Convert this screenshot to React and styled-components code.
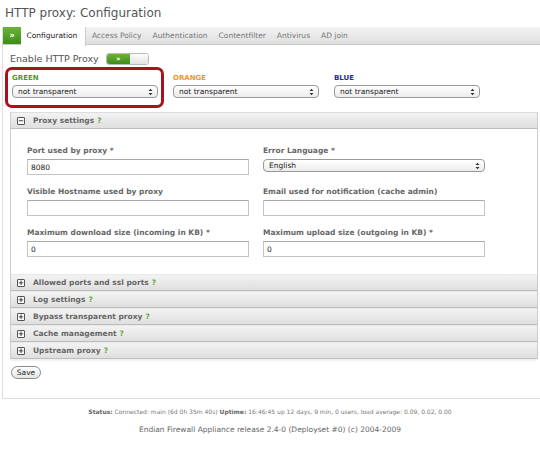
import React from 'react';
import styled, { createGlobalStyle } from 'styled-components';

const GlobalStyle = createGlobalStyle`
    body {
        margin: 0;
        background: #fff;
        font-family: "DejaVu Sans", "Liberation Sans", sans-serif;
        color: #555;
    }
`

const zones = [
    { name: 'GREEN', color: '#4c9a1e' },
    { name: 'ORANGE', color: '#f0962a' },
    { name: 'BLUE', color: '#2a2e8c' },
]

const tabs = ['Access Policy', 'Authentication', 'Contentfilter', 'Antivirus', 'AD join']

const collapsed = [
    'Allowed ports and ssl ports',
    'Log settings',
    'Bypass transparent proxy',
    'Cache management',
    'Upstream proxy',
]

function Select({ value, width }) {
    return (
        <SelectBox width={width}>
            <span>{value}</span>
            <Arrows>
                <svg width="5" height="8" viewBox="0 0 5 8">
                    <path d="M0.5 3 L2.5 0.8 L4.5 3 Z M0.5 5 L2.5 7.2 L4.5 5 Z" fill="#333" />
                </svg>
            </Arrows>
        </SelectBox>
    )
}

function Toggle() {
    return (
        <Switch>
            <SwitchOn>»</SwitchOn>
            <SwitchOff />
        </Switch>
    )
}

function App() {
    return (
        <>
            <GlobalStyle />
            <Title>HTTP proxy: Configuration</Title>
            <Frame>
                <TabBar>
                    <GreenTab>»</GreenTab>
                    <Tab active>Configuration</Tab>
                    {tabs.map(t => <Tab key={t}>{t}</Tab>)}
                </TabBar>
                <Content>
                    <EnableRow>
                        Enable HTTP Proxy
                        <Toggle />
                    </EnableRow>
                    <ZoneRow>
                        <Highlight />
                        {zones.map(z => (
                            <Zone key={z.name}>
                                <ZoneLabel color={z.color}>{z.name}</ZoneLabel>
                                <Select value="not transparent" width={146} />
                            </Zone>
                        ))}
                    </ZoneRow>
                    <Panels>
                        <PanelHeader>
                            <ToggleIcon>−</ToggleIcon>
                            Proxy settings <Help>?</Help>
                        </PanelHeader>
                        <PanelBody>
                            <Field>
                                <Label>Port used by proxy *</Label>
                                <Input defaultValue="8080" />
                            </Field>
                            <Field>
                                <Label>Error Language *</Label>
                                <Select value="English" width={222} />
                            </Field>
                            <Field>
                                <Label>Visible Hostname used by proxy</Label>
                                <Input />
                            </Field>
                            <Field>
                                <Label>Email used for notification (cache admin)</Label>
                                <Input />
                            </Field>
                            <Field>
                                <Label>Maximum download size (incoming in KB) *</Label>
                                <Input defaultValue="0" />
                            </Field>
                            <Field>
                                <Label>Maximum upload size (outgoing in KB) *</Label>
                                <Input defaultValue="0" />
                            </Field>
                        </PanelBody>
                        {collapsed.map(c => (
                            <PanelHeader key={c} closed>
                                <ToggleIcon>+</ToggleIcon>
                                {c} <Help>?</Help>
                            </PanelHeader>
                        ))}
                    </Panels>
                    <SaveButton>Save</SaveButton>
                </Content>
            </Frame>
            <Footer>
                <Status>
                    <b>Status:</b> Connected: main (6d 0h 35m 40s) <b>Uptime:</b> 16:46:45 up 12 days, 9 min, 0 users, load average: 0.09, 0.02, 0.00
                </Status>
                <Release>Endian Firewall Appliance release 2.4-0 (Deployset #0) (c) 2004-2009</Release>
            </Footer>
        </>
    )
}

export default App

const Title = styled.h1`
    margin: 0;
    height: 27px;
    padding-left: 5px;
    font-size: 12px;
    font-weight: normal;
    line-height: 27px;
    color: #555;
`

const Frame = styled.div`
    margin-left: 2px;
    border-left: 1px solid #ddd;
    border-bottom: 1px solid #ddd;
    height: 372px;
    box-sizing: border-box;
`

const TabBar = styled.div`
    display: flex;
    align-items: stretch;
    height: 18px;
    background: linear-gradient(#f4f4f4, #dedede);
    border-bottom: 1px solid #c8c8c8;
    box-sizing: border-box;
`

const GreenTab = styled.div`
    width: 18px;
    background: linear-gradient(#6bb43a, #3f8c1a);
    color: #fff;
    font-size: 8px;
    font-weight: bold;
    display: flex;
    align-items: center;
    justify-content: center;
`

const Tab = styled.div`
    padding: ${p => p.active ? '0 8px 0 5.5px' : '0 5.5px'};
    font-size: 7.5px;
    line-height: 18px;
    color: ${p => p.active ? '#222' : '#777'};
    background: ${p => p.active ? '#fff' : 'transparent'};
    border-right: ${p => p.active ? '1px solid #ccc' : 'none'};
    height: ${p => p.active ? '19px' : '18px'};
    white-space: nowrap;
`

const Content = styled.div`
    padding: 7px 0 0 7px;
`

const EnableRow = styled.div`
    display: flex;
    align-items: center;
    gap: 7px;
    height: 13px;
    font-size: 9.5px;
    color: #555;
`

const Switch = styled.div`
    display: flex;
    width: 43px;
    height: 12px;
    border: 1px solid #bbb;
    border-radius: 3px;
    overflow: hidden;
    box-sizing: border-box;
`

const SwitchOn = styled.div`
    width: 23px;
    background: linear-gradient(#6bb43a, #3f8c1a);
    color: #fff;
    font-size: 7px;
    font-weight: bold;
    line-height: 10px;
    text-align: center;
`

const SwitchOff = styled.div`
    flex: 1;
    background: linear-gradient(#fdfdfd, #e4e4e4);
`

const ZoneRow = styled.div`
    position: relative;
    display: flex;
    gap: 15px;
    padding: 9px 0 0 2px;
    height: 38px;
`

const Highlight = styled.div`
    position: absolute;
    left: -5px;
    top: 2px;
    width: 159px;
    height: 41px;
    border: 3px solid #a8121a;
    border-radius: 7px;
    box-sizing: border-box;
`

const Zone = styled.div`
    display: flex;
    flex-direction: column;
    gap: 3px;
`

const ZoneLabel = styled.div`
    font-size: 7px;
    font-weight: bold;
    line-height: 8px;
    color: ${p => p.color};
`

const SelectBox = styled.div`
    display: flex;
    align-items: center;
    justify-content: space-between;
    width: ${p => p.width}px;
    height: 13px;
    padding: 0 4px 0 5px;
    border: 1px solid #999;
    border-radius: 4px;
    background: linear-gradient(#fff, #ececec);
    box-sizing: border-box;
    font-size: 7.5px;
    color: #222;
`

const Arrows = styled.span`
    display: flex;
    align-items: center;
`

const Panels = styled.div`
    margin-top: 0;
    width: 526px;
    border-left: 1px solid #ccc;
    border-right: 1px solid #ccc;
    box-shadow: 0 3px 2px -1px #eee;
`

const PanelHeader = styled.div`
    display: flex;
    align-items: center;
    gap: 3px;
    height: 17px;
    padding-left: 6px;
    box-sizing: border-box;
    background: linear-gradient(#f3f3f3, #dfdfdf);
    border-top: 1px solid ${p => p.closed ? '#e8e8e8' : '#ddd'};
    border-bottom: 1px solid #bdbdbd;
    font-size: 7.5px;
    font-weight: bold;
    color: #666;
`

const ToggleIcon = styled.span`
    display: inline-flex;
    align-items: center;
    justify-content: center;
    width: 8px;
    height: 8px;
    margin-right: 5px;
    border: 1px solid #555;
    border-radius: 1px;
    background: #fafafa;
    box-sizing: border-box;
    font-size: 7px;
    line-height: 6px;
    color: #222;
`

const Help = styled.span`
    color: #6aa63a;
`

const PanelBody = styled.div`
    display: grid;
    grid-template-columns: 222px 222px;
    column-gap: 14px;
    row-gap: 12px;
    padding: 17px 0 17px 16px;
    background: #fff;
`

const Field = styled.div`
    display: flex;
    flex-direction: column;
    gap: 4px;
`

const Label = styled.label`
    display: block;
    height: 9px;
    font-size: 7.5px;
    font-weight: bold;
    line-height: 9px;
    color: #666;
`

const Input = styled.input`
    display: block;
    width: 222px;
    height: 16px;
    margin: 0;
    padding: 0 3px;
    border: 1px solid #c4c4c4;
    border-top-color: #aaa;
    box-sizing: border-box;
    font-family: inherit;
    font-size: 7.5px;
    color: #222;
    outline: none;
`

const SaveButton = styled.button`
    display: block;
    margin-top: 7px;
    margin-left: 1px;
    width: 30px;
    height: 13px;
    padding: 0;
    border: 1px solid #888;
    border-radius: 7px;
    background: linear-gradient(#fff, #e6e6e6);
    font-family: inherit;
    font-size: 7.5px;
    color: #222;
`

const Footer = styled.div`
    text-align: center;
    padding-top: 9px;
`

const Status = styled.div`
    font-size: 6px;
    line-height: 8px;
    color: #777;
    b {
        color: #666;
    }
`

const Release = styled.div`
    margin-top: 9px;
    font-size: 7.5px;
    line-height: 9px;
    color: #666;
`
